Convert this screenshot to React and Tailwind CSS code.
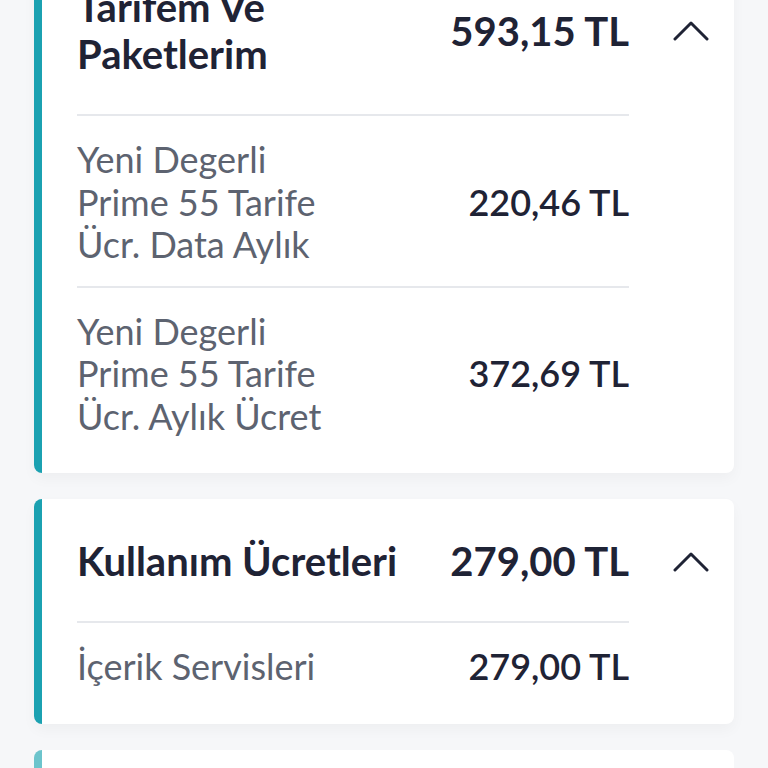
const sections = [
  {
    title: "Tarifem Ve Paketlerim",
    titleClass: "w-[240px]",
    total: "593,15 TL",
    items: [
      { label: "Yeni Degerli Prime 55 Tarife Ücr. Data Aylık", amount: "220,46 TL" },
      { label: "Yeni Degerli Prime 55 Tarife Ücr. Aylık Ücret", amount: "372,69 TL" },
    ],
  },
  {
    title: "Kullanım Ücretleri",
    titleClass: "whitespace-nowrap",
    total: "279,00 TL",
    items: [{ label: "İçerik Servisleri", amount: "279,00 TL" }],
  },
];

function Chevron() {
  return (
    <svg width="36" height="20" viewBox="0 0 36 20" fill="none" className="text-[#1f2335]">
      <polyline points="2,18 18,2 34,18" stroke="currentColor" strokeWidth="3" strokeLinecap="round" strokeLinejoin="round" />
    </svg>
  );
}

function Section({ section }) {
  return (
    <div className="rounded-lg border-l-[8px] border-[#1ba1b1] bg-white pt-[39px] pb-[16px] shadow-[0_6px_14px_rgba(0,0,0,0.035)]">
      <div className="flex items-center pb-[36px]">
        <div className="ml-[35px] flex flex-1 items-center justify-between">
          <h2 className={`text-[40px] leading-[47px] font-bold text-[#1f2335] ${section.titleClass}`}>{section.title}</h2>
          <span className="text-[40px] leading-[47px] font-bold text-[#1f2335]">{section.total}</span>
        </div>
        <div className="flex w-[105px] justify-start pl-[44px]">
          <Chevron />
        </div>
      </div>
      {section.items.map((item) => (
        <div key={item.label} className="mr-[105px] ml-[35px] flex items-center justify-between border-t-2 border-[#e6e8ec] pt-[22px] pb-[20px]">
          <p className="w-[275px] text-[36px] leading-[42.5px] text-[#5d6370]">{item.label}</p>
          <span className="text-[36px] leading-[42.5px] font-semibold text-[#1f2335]">{item.amount}</span>
        </div>
      ))}
    </div>
  );
}

export default function App() {
  return (
    <div className="h-[768px] overflow-hidden bg-[#f6f7f9] font-['Lato',sans-serif]">
      <div className="-mt-[55px] flex flex-col gap-[26px] px-[34px]">
        {sections.map((s) => (
          <Section key={s.title} section={s} />
        ))}
        <div className="h-[120px] rounded-lg border-l-[8px] border-[#6cc4cc] bg-white" />
      </div>
    </div>
  );
}
